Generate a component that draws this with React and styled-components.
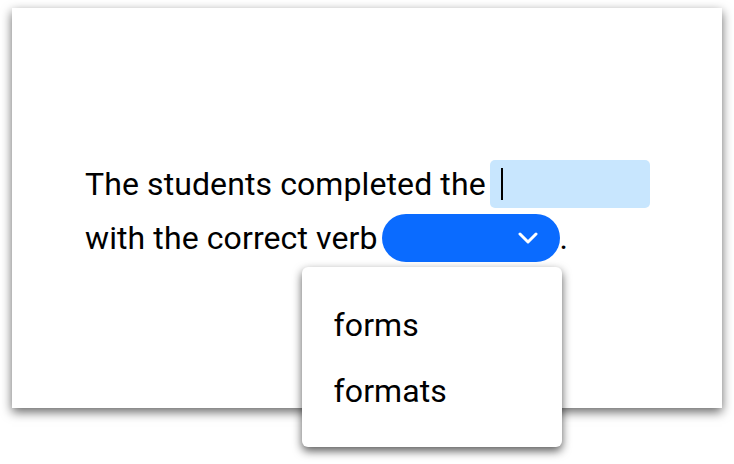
import React from "react";
import styled, { createGlobalStyle } from "styled-components";

const Global = createGlobalStyle`
  html, body { margin: 0; padding: 0; background: #ffffff; }
  body { font-family: Roboto, "Liberation Sans", sans-serif; }
`;

const Page = styled.div`
  width: 734px;
  height: 464px;
  padding: 8px 12px 0 12px;
  box-sizing: border-box;
`;

const Card = styled.div`
  position: relative;
  width: 710px;
  height: 400px;
  background: #fff;
  box-shadow: 0 4px 10px rgba(0, 0, 0, 0.6);
  padding: 149px 0 0 73px;
  box-sizing: border-box;
`;

const Sentence = styled.div`
  font-size: 32px;
  letter-spacing: 0.1px;
  line-height: 54px;
  color: #000;
`;

const Line = styled.div`
  display: flex;
  align-items: center;
  height: 54px;
  white-space: pre;
`;

const Blank = styled.span`
  display: inline-flex;
  align-items: center;
  width: 160px;
  height: 48px;
  margin-left: 4px;
  background: #c8e6fe;
  border-radius: 5px;
  padding-left: 11px;
  box-sizing: border-box;
`;

const Caret = styled.span`
  width: 2px;
  height: 32px;
  background: #000;
`;

const SelectWrap = styled.span`
  position: relative;
  display: inline-flex;
  margin-left: 4px;
`;

const Select = styled.span`
  display: inline-flex;
  align-items: center;
  justify-content: flex-end;
  width: 178px;
  height: 48px;
  background: #0a6bff;
  border-radius: 24px;
  padding-right: 22px;
  box-sizing: border-box;
`;

const Menu = styled.div`
  position: absolute;
  top: 53px;
  left: -80px;
  width: 260px;
  height: 180px;
  background: #fff;
  border-radius: 6px;
  box-shadow: 0 4px 10px rgba(0, 0, 0, 0.65);
  padding: 25px 0 0 0;
  box-sizing: border-box;
  z-index: 2;
`;

const Item = styled.div`
  height: 66px;
  display: flex;
  align-items: center;
  padding-left: 32px;
  font-size: 32px;
  color: #000;
`;

export default function App() {
  return (
    <>
      <Global />
      <Page>
        <Card>
          <Sentence>
            <Line>
              The students completed the
              <Blank>
                <Caret />
              </Blank>
            </Line>
            <Line>
              with the correct verb
              <SelectWrap>
                <Select>
                  <svg width="20" height="12" viewBox="0 0 20 12">
                    <path d="M2 2 L10 10 L18 2" fill="none" stroke="#fff" strokeWidth="3" strokeLinecap="round" strokeLinejoin="round" />
                  </svg>
                </Select>
                <Menu>
                  <Item>forms</Item>
                  <Item>formats</Item>
                </Menu>
              </SelectWrap>
              .
            </Line>
          </Sentence>
        </Card>
      </Page>
    </>
  );
}
